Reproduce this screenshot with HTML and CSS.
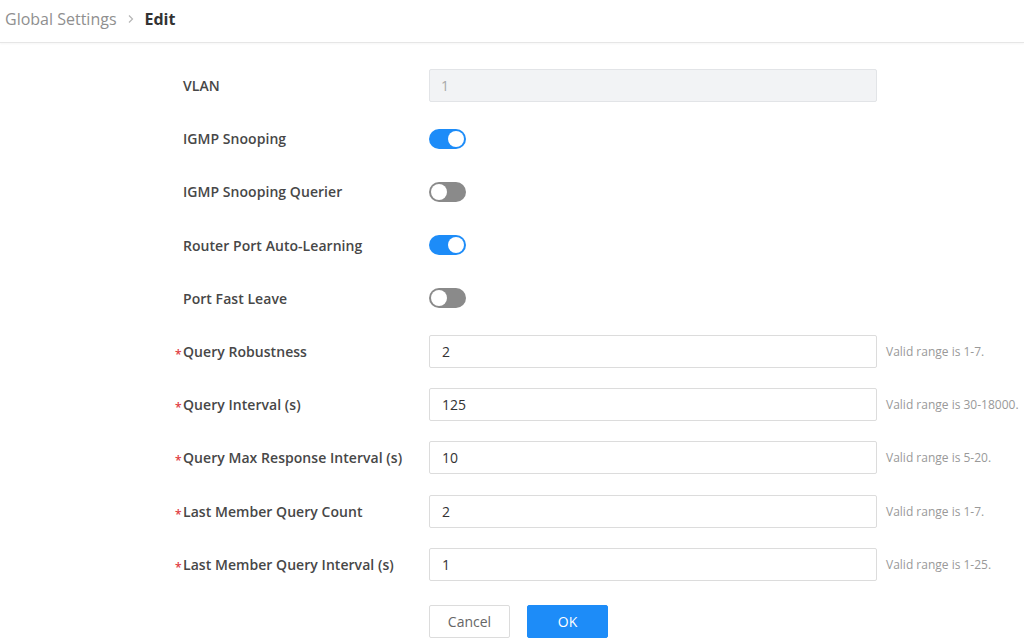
FILE: index.html
```html
<!DOCTYPE html>
<html>
<head>
<meta charset="utf-8">
<link rel="stylesheet" href="styles.css">
</head>
<body>
<header class="header">
  <span class="crumb">Global Settings</span>
  <svg class="sep" width="8" height="10" viewBox="0 0 8 10"><path d="M2 1.5 L5.5 5 L2 8.5" fill="none" stroke="#b5b5b5" stroke-width="1.2"/></svg>
  <span class="crumb-current">Edit</span>
</header>
<main class="form">
  <div class="grid">
    <div class="label">VLAN</div>
    <div class="field"><div class="input disabled">1</div></div>
    <div class="hint"></div>

    <div class="label">IGMP Snooping</div>
    <div class="field"><span class="switch on"><span class="knob"></span></span></div>
    <div class="hint"></div>

    <div class="label">IGMP Snooping Querier</div>
    <div class="field"><span class="switch"><span class="knob"></span></span></div>
    <div class="hint"></div>

    <div class="label">Router Port Auto-Learning</div>
    <div class="field"><span class="switch on"><span class="knob"></span></span></div>
    <div class="hint"></div>

    <div class="label">Port Fast Leave</div>
    <div class="field"><span class="switch"><span class="knob"></span></span></div>
    <div class="hint"></div>

    <div class="label"><span class="req">*</span>Query Robustness</div>
    <div class="field"><div class="input">2</div></div>
    <div class="hint">Valid range is 1-7.</div>

    <div class="label"><span class="req">*</span>Query Interval (s)</div>
    <div class="field"><div class="input">125</div></div>
    <div class="hint">Valid range is 30-18000.</div>

    <div class="label"><span class="req">*</span>Query Max Response Interval (s)</div>
    <div class="field"><div class="input">10</div></div>
    <div class="hint">Valid range is 5-20.</div>

    <div class="label"><span class="req">*</span>Last Member Query Count</div>
    <div class="field"><div class="input">2</div></div>
    <div class="hint">Valid range is 1-7.</div>

    <div class="label"><span class="req">*</span>Last Member Query Interval (s)</div>
    <div class="field"><div class="input">1</div></div>
    <div class="hint">Valid range is 1-25.</div>
  </div>
  <div class="actions">
    <button class="btn cancel">Cancel</button>
    <button class="btn ok">OK</button>
  </div>
</main>
</body>
</html>
```
FILE: styles.css
```css
* { box-sizing: border-box; }
html, body { margin: 0; padding: 0; background: #fff; }
body {
  font-family: "Open Sans", "Noto Sans", "Liberation Sans", sans-serif;
  color: #333;
  width: 1024px;
  height: 642px;
  overflow: hidden;
}
.header {
  height: 43px;
  border-bottom: 1px solid #e6e6e6;
  box-shadow: 0 1px 2px rgba(0,0,0,0.04);
  display: flex;
  align-items: center;
  padding-left: 5px;
  padding-bottom: 4px;
}
.crumb {
  font-size: 16px;
  color: #8f8f8f;
}
.sep { margin: 0 10px 0 10px; }
.crumb-current {
  font-size: 16px;
  font-weight: 700;
  color: #333;
}
.form {
  padding-top: 26px;
  padding-left: 175px;
}
.grid {
  display: grid;
  grid-template-columns: 254px 448px auto;
  grid-auto-rows: 33px;
  row-gap: 20.2px;
  align-items: center;
}
.label {
  font-size: 14px;
  font-weight: 600;
  color: #474747;
  letter-spacing: 0.05px;
  padding-left: 8px;
  display: flex;
  align-items: center;
  white-space: nowrap;
}
.req {
  color: #e0393e;
  font-size: 12px;
  width: 8px;
  margin-left: -8px;
  position: relative;
  top: 3px;
}
.field { display: flex; align-items: center; height: 33px; }
.input {
  width: 448px;
  height: 33px;
  border: 1px solid #dcdcdc;
  border-radius: 2px;
  padding-left: 12px;
  font-size: 14px;
  color: #333;
  display: flex;
  align-items: center;
}
.input.disabled {
  background: #f2f3f5;
  border-color: #e2e4e7;
  color: #a8a8a8;
  padding-left: 11px;
}
.hint {
  font-size: 12px;
  color: #999;
  padding-left: 9px;
  white-space: nowrap;
}
.switch {
  width: 37px;
  height: 20px;
  border-radius: 10px;
  background: #8a8a8a;
  display: flex;
  align-items: center;
  padding: 0 2px;
}
.switch .knob {
  width: 16px;
  height: 16px;
  border-radius: 50%;
  background: #fff;
}
.switch.on {
  background: #1d8cf8;
  justify-content: flex-end;
}
.actions {
  display: flex;
  gap: 17px;
  margin-top: 24px;
  margin-left: 254px;
}
.btn {
  width: 81px;
  height: 33px;
  font-family: inherit;
  font-size: 14px;
  border-radius: 2px;
  cursor: pointer;
}
.btn.cancel {
  background: #fff;
  border: 1px solid #dcdcdc;
  color: #666;
}
.btn.ok {
  background: #1d8cf8;
  border: 1px solid #1d8cf8;
  color: #fff;
}
```
